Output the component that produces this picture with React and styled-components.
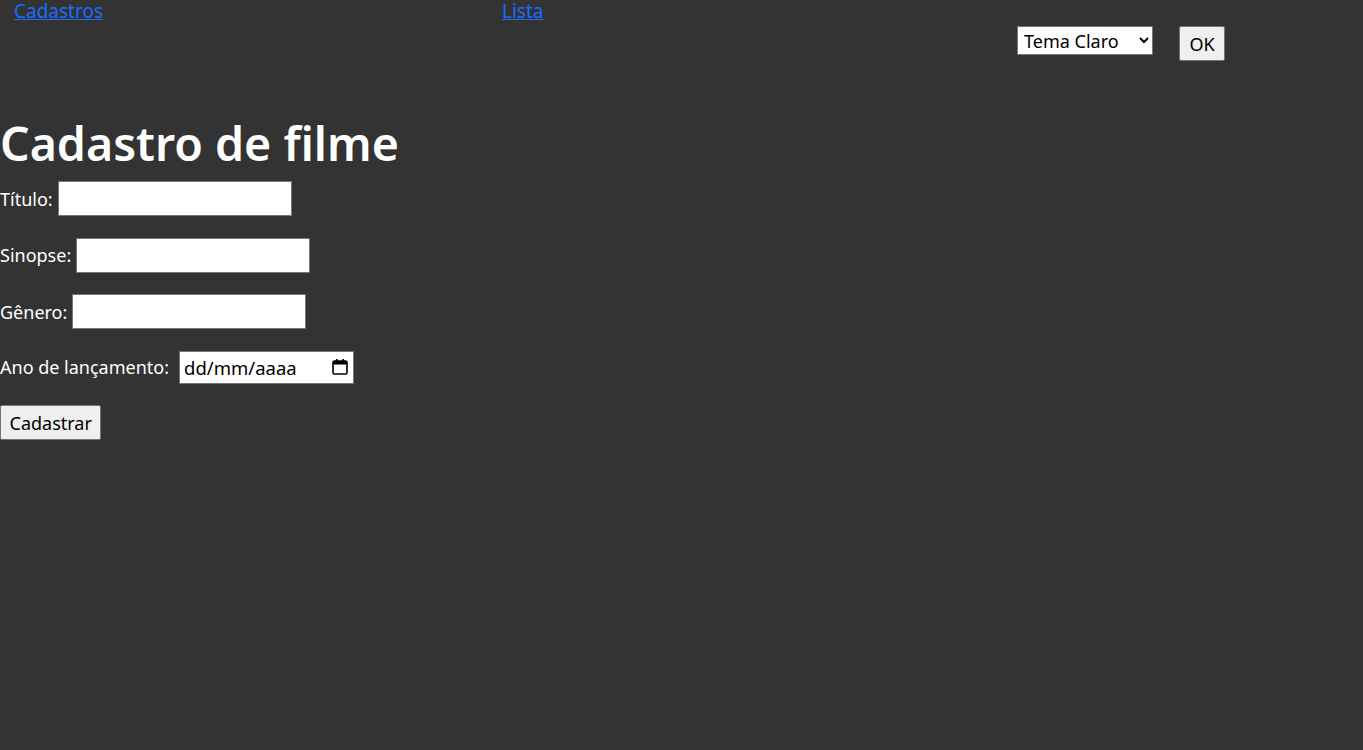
import React, { useState } from "react";
import styled, { createGlobalStyle } from "styled-components";

const GlobalStyle = createGlobalStyle`
  html, body {
    margin: 0;
    padding: 0;
    background: #333333;
    font-family: "Noto Sans", "Open Sans", sans-serif;
    color: #ffffff;
  }
`;

const Header = styled.header`
  display: grid;
  grid-template-columns: 488px 515px auto;
  padding-left: 14px;
  height: 110px;
`;

const NavLink = styled.a`
  color: #1a6bff;
  font-size: 19px;
  line-height: 22px;
  text-decoration: underline;
  align-self: start;
  justify-self: start;
`;

const ThemeControls = styled.div`
  display: flex;
  align-items: flex-start;
  gap: 26px;
  padding-top: 26px;
`;

const ThemeSelect = styled.select`
  width: 136px;
  height: 29px;
  font-family: inherit;
  font-size: 18px;
  color: #000;
  background: #fff;
  border: 1px solid #767676;
  border-radius: 0;
  padding: 0 2px;
`;

const Button = styled.button`
  font-family: inherit;
  font-size: 18px;
  color: #000;
  background: #efefef;
  border: 1px solid #767676;
  border-radius: 2px;
  height: 35px;
  padding: 0 ${(p) => p.$pad || 8}px;
  cursor: pointer;
`;

const Title = styled.h1`
  margin: 0 0 5px;
  font-size: 46.5px;
  font-weight: 600;
  line-height: 66px;
`;

const Form = styled.form`
  display: flex;
  flex-direction: column;
  align-items: flex-start;
  gap: 21.5px;
`;

const Row = styled.label`
  display: flex;
  align-items: center;
  gap: 5px;
  font-size: 18px;
`;

const TextInput = styled.input`
  box-sizing: border-box;
  width: 234px;
  height: 35px;
  border: 1px solid #767676;
  background: #fff;
  font-family: inherit;
  font-size: 18px;
  padding: 2px 3px;
`;

const DateField = styled.span`
  box-sizing: border-box;
  display: flex;
  align-items: center;
  width: 175px;
  height: 33px;
  margin-left: 5px;
  border: 1px solid #767676;
  background: #fff;
  padding: 0 4px;
`;

const DateText = styled.input`
  flex: 1;
  min-width: 0;
  border: none;
  outline: none;
  padding: 0;
  font-family: inherit;
  font-size: 18.5px;
  color: #000;
  background: transparent;

  &::placeholder {
    color: #000;
  }
`;

const CalendarIcon = () => (
  <svg width="18" height="18" viewBox="0 0 18 18" aria-hidden="true">
    <rect x="2" y="3" width="14" height="13" rx="1.5" fill="none" stroke="#000" strokeWidth="1.6" />
    <rect x="2" y="3" width="14" height="3.5" fill="#000" />
    <rect x="5" y="1" width="1.6" height="3" fill="#000" />
    <rect x="11.4" y="1" width="1.6" height="3" fill="#000" />
  </svg>
);

export default function App() {
  const [filme, setFilme] = useState({ titulo: "", sinopse: "", genero: "", ano: "" });
  const change = (e) => setFilme((prev) => ({ ...prev, [e.target.name]: e.target.value }));

  return (
    <>
      <GlobalStyle />
      <Header>
        <NavLink href="#">Cadastros</NavLink>
        <NavLink href="#">Lista</NavLink>
        <ThemeControls>
          <ThemeSelect defaultValue="claro">
            <option value="claro">Tema Claro</option>
            <option value="escuro">Tema Escuro</option>
          </ThemeSelect>
          <Button $pad={9.5}>OK</Button>
        </ThemeControls>
      </Header>
      <main>
        <Title>Cadastro de filme</Title>
        <Form onSubmit={(e) => e.preventDefault()}>
          <Row>
            Título: <TextInput name="titulo" value={filme.titulo} onChange={change} />
          </Row>
          <Row>
            Sinopse: <TextInput name="sinopse" value={filme.sinopse} onChange={change} />
          </Row>
          <Row>
            Gênero: <TextInput name="genero" value={filme.genero} onChange={change} />
          </Row>
          <Row>
            Ano de lançamento:
            <DateField>
              <DateText name="ano" placeholder="dd/mm/aaaa" value={filme.ano} onChange={change} />
              <CalendarIcon />
            </DateField>
          </Row>
          <Button type="submit" $pad={8.5}>Cadastrar</Button>
        </Form>
      </main>
    </>
  );
}
